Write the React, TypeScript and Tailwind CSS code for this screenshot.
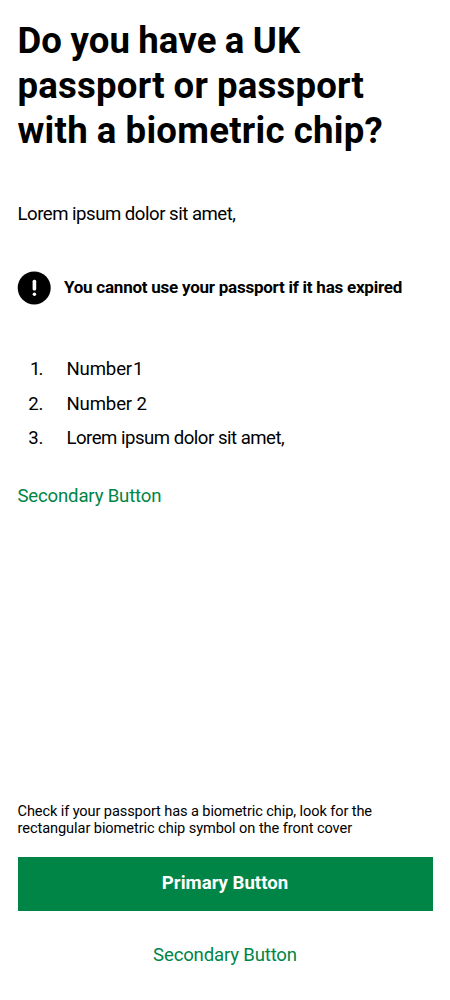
import React from "react";

const steps = [
  { label: "Number 1", text: "tracking-[-0.15px] [word-spacing:-3.4px]", digit: "tracking-[-1.8px]" },
  { label: "Number 2", text: "tracking-[-0.15px]", digit: "tracking-normal" },
  { label: "Lorem ipsum dolor sit amet,", text: "tracking-[-0.5px]", digit: "tracking-normal" },
];

export default function App() {
  return (
    <main className="flex h-[1000px] w-[450px] flex-col bg-white px-[17.5px] pt-[18px] font-['Roboto','Noto_Sans',sans-serif] text-[18.6px] leading-[28px] text-black">
      <h1 className="text-[36.6px] leading-[45px] font-bold whitespace-nowrap">
        <span className="block tracking-[0.1px] [word-spacing:-0.9px]">Do you have a UK</span>
        <span className="block tracking-[0.2px] [word-spacing:-0.4px]">passport or passport</span>
        <span className="block tracking-[0.25px] [word-spacing:-0.4px]">with a biometric chip?</span>
      </h1>

      <p className="mt-[47px] tracking-[-0.49px] whitespace-nowrap">Lorem ipsum dolor sit amet,</p>

      <div className="mt-[43px] flex h-[34px] items-center gap-[13.5px]">
        <svg className="h-[34px] w-[33px] shrink-0 overflow-visible" viewBox="0 0 33 34" aria-hidden="true">
          <circle cx="16.2" cy="16.9" r="16.5" fill="black" />
          <rect x="14.6" y="8.7" width="3.6" height="10.8" rx="1.5" fill="white" />
          <circle cx="16.4" cy="23.3" r="1.7" fill="white" />
        </svg>
        <strong className="pb-[2px] text-[17px] font-bold tracking-[-0.24px] whitespace-nowrap">
          You cannot use your passport if it has expired
        </strong>
      </div>

      <ol className="mt-[50px] flex flex-col">
        {steps.map((step, i) => (
          <li key={step.label} className="flex h-[34.6px] items-start">
            <span className="w-[26px] text-right">
              <span className={step.digit}>{i + 1}</span>.
            </span>
            <span className={`ml-[23px] whitespace-nowrap ${step.text}`}>{step.label}</span>
          </li>
        ))}
      </ol>

      <button className="mt-[23px] self-start tracking-[-0.18px] whitespace-nowrap text-[#008547]">Secondary Button</button>

      <footer className="mt-auto flex flex-col pb-[31px]">
        <p className="text-[14.6px] leading-[17.4px] whitespace-nowrap">
          <span className="block tracking-[-0.11px]">Check if your passport has a biometric chip, look for the</span>
          <span className="block tracking-[-0.08px]">rectangular biometric chip symbol on the front cover</span>
        </p>
        <button className="mt-[19px] flex h-[54.3px] items-center justify-center bg-[#008547] pb-[1px] font-bold text-white">
          Primary Button
        </button>
        <button className="mt-[30px] self-center tracking-[-0.18px] whitespace-nowrap text-[#008547]">Secondary Button</button>
      </footer>
    </main>
  );
}
